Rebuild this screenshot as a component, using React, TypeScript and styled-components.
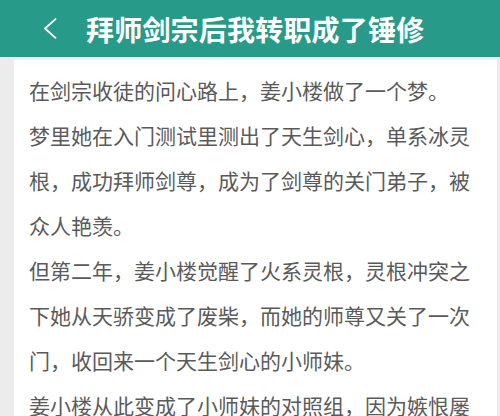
import { FunctionComponent } from "react";
import styled, { createGlobalStyle } from "styled-components";

const GlobalStyle = createGlobalStyle`
  html, body {
    margin: 0;
    padding: 0;
    background: #ececec;
  }
  body {
    font-family: "Noto Sans CJK SC", "Noto Sans", sans-serif;
  }
`;

const Screen = styled.div`
  width: 500px;
  height: 416px;
  overflow: hidden;
  display: flex;
  flex-direction: column;
  background: #ececec;
`;

const TopBar = styled.header`
  height: 57px;
  flex-shrink: 0;
  display: flex;
  flex-direction: row;
  align-items: center;
  padding-left: 42px;
  background: #289a89;
  color: #ffffff;
`;

const BackButton = styled.button`
  width: 16px;
  height: 24px;
  padding: 0;
  margin: 0;
  border: none;
  background: transparent;
  display: flex;
  align-items: center;
  justify-content: center;
  color: #ffffff;
  cursor: pointer;
`;

const Title = styled.h1`
  margin: 0 0 0 28px;
  font-size: 28px;
  line-height: 34px;
  font-weight: 700;
  letter-spacing: 0.2px;
  white-space: nowrap;
`;

const Body = styled.main`
  flex: 1;
  display: flex;
  flex-direction: row;
  padding: 1px 3px 0 14px;
  min-height: 0;
`;

const Sheet = styled.article`
  flex: 1;
  background: #ffffff;
  border-top: 2px solid #eef1f1;
  padding: 8px 18px 0 15px;
  overflow: hidden;
`;

const Paragraph = styled.p`
  margin: 0;
  font-size: 21px;
  line-height: 45px;
  color: #5a5a5a;
  word-break: break-all;
`;

const paragraphs = [
  "在剑宗收徒的问心路上，姜小楼做了一个梦。",
  "梦里她在入门测试里测出了天生剑心，单系冰灵根，成功拜师剑尊，成为了剑尊的关门弟子，被众人艳羡。",
  "但第二年，姜小楼觉醒了火系灵根，灵根冲突之下她从天骄变成了废柴，而她的师尊又关了一次门，收回来一个天生剑心的小师妹。",
  "姜小楼从此变成了小师妹的对照组，因为嫉恨屡次陷害小师妹，最后被逐出师门。",
];

const App: FunctionComponent = () => {
  return (
    <>
      <GlobalStyle />
      <Screen>
        <TopBar>
          <BackButton aria-label="返回">
            <svg width="14" height="21" viewBox="0 0 14 21" fill="none">
              <path
                d="M12.5 1.2 L2 10.5 L12.5 19.8"
                stroke="currentColor"
                strokeWidth="1.8"
                strokeLinecap="round"
                strokeLinejoin="round"
              />
            </svg>
          </BackButton>
          <Title>拜师剑宗后我转职成了锤修</Title>
        </TopBar>
        <Body>
          <Sheet>
            {paragraphs.map((text, i) => (
              <Paragraph key={i}>{text}</Paragraph>
            ))}
          </Sheet>
        </Body>
      </Screen>
    </>
  );
};

export default App;
